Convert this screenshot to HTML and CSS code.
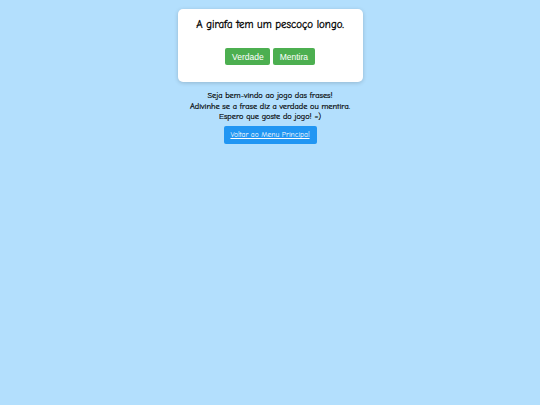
FILE: index.html
```html
<!DOCTYPE html>
<html lang="pt">
<head>
<meta charset="utf-8">
<link rel="stylesheet" href="styles.css">
</head>
<body>
<main class="page">
  <section class="card">
    <p class="question">A girafa tem um pescoço longo.</p>
    <div class="answers">
      <button class="btn btn-green">Verdade</button>
      <button class="btn btn-green">Mentira</button>
    </div>
  </section>
  <div class="intro">
    <p>Seja bem-vindo ao jogo das frases!</p>
    <p>Adivinhe se a frase diz a verdade ou mentira.</p>
    <p>Espero que goste do jogo! =)</p>
  </div>
  <a class="back" href="#">Voltar ao Menu Principal</a>
</main>
</body>
</html>
```

FILE: styles.css
```css
html, body {
  margin: 0;
  padding: 0;
  background: #b3dffd;
  height: 100%;
}
body {
  font-family: "Comic Sans MS", "Comic Neue", "DejaVu Sans", cursive, sans-serif;
  color: #000;
}
.page {
  display: flex;
  flex-direction: column;
  align-items: center;
  padding-top: 9px;
}
.card {
  width: 185px;
  box-sizing: border-box;
  background: #fff;
  border-radius: 5px;
  box-shadow: 0 1px 4px rgba(0,0,0,0.18);
  padding: 8px 6px 17px;
  text-align: center;
}
.question {
  margin: 0;
  font-size: 10.9px;
  font-weight: 400;
  line-height: 15px;
  white-space: nowrap;
  -webkit-text-stroke: 0.3px #000;
}
.answers {
  display: flex;
  justify-content: center;
  gap: 3px;
  margin-top: 16px;
}
.btn {
  font-family: "Liberation Sans", Arial, sans-serif;
  font-size: 8.5px;
  border: none;
  border-radius: 2px;
  height: 17px;
  padding: 0 6.5px;
  color: #fff;
}
.btn-green {
  background: #4caf50;
}
.intro {
  margin-top: 9px;
  text-align: center;
  font-size: 8.3px;
  font-weight: 400;
  line-height: 10.5px;
  -webkit-text-stroke: 0.2px #000;
}
.intro p {
  margin: 0;
}
.back {
  margin-top: 3px;
  display: inline-flex;
  align-items: center;
  justify-content: center;
  width: 93px;
  height: 18px;
  background: #2196f3;
  color: #fff;
  border-radius: 2px;
  font-size: 7.5px;
  text-decoration: underline;
}
```
